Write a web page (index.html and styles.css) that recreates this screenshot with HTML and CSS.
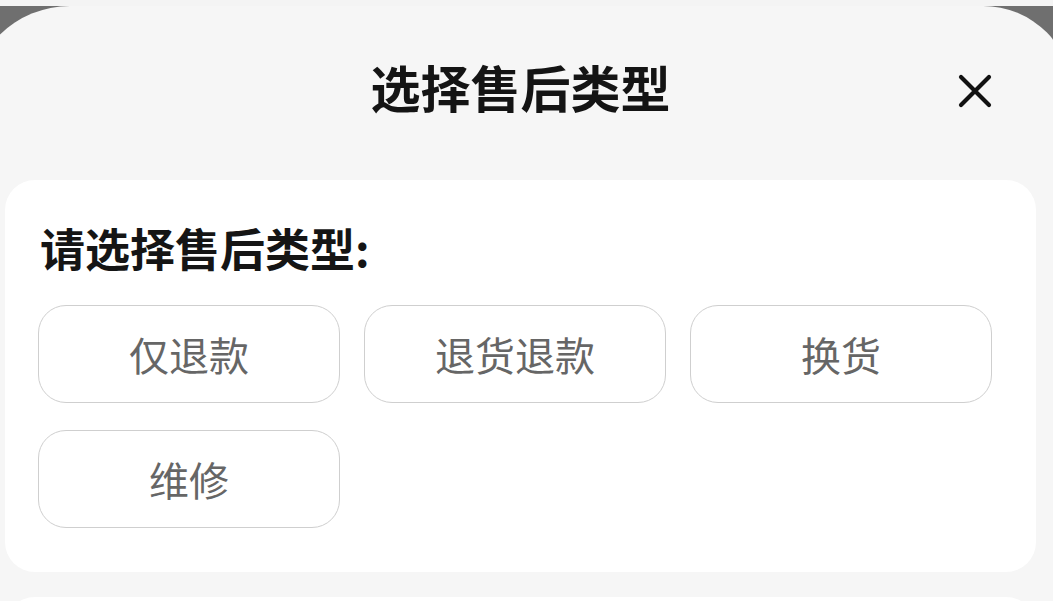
FILE: index.html
```html
<!DOCTYPE html>
<html lang="zh-CN">
<head>
<meta charset="utf-8">
<title>选择售后类型</title>
<link rel="stylesheet" href="styles.css">
</head>
<body>
<div class="sheet">
  <header class="sheet-header">
    <h1 class="sheet-title">选择售后类型</h1>
    <button class="close-btn" aria-label="关闭">
      <svg viewBox="0 0 34 34" width="34" height="34"><path d="M3 3 L31 31 M31 3 L3 31" stroke="#111" stroke-width="4.2" stroke-linecap="round" fill="none"/></svg>
    </button>
  </header>
  <section class="card">
    <h2 class="card-label">请选择售后类型:</h2>
    <div class="options">
      <button class="option">仅退款</button>
      <button class="option">退货退款</button>
      <button class="option">换货</button>
      <button class="option">维修</button>
    </div>
  </section>
  <section class="card card-next"></section>
</div>
</body>
</html>
```
FILE: styles.css
```css
html, body {
  margin: 0;
  padding: 0;
  overflow: hidden;
  height: 100%;
}
body {
  background: linear-gradient(#f4f4f4 0 6px, #6f6f6f 6px);
  font-family: "Noto Sans CJK SC", "Noto Sans", sans-serif;
}
.sheet {
  margin: 6px -20px 0 -30px;
  padding: 0 37px 0 35px;
  background: #f6f6f6;
  border-radius: 100px 90px 0 0;
  min-height: 700px;
}
.sheet-header {
  display: grid;
  grid-template-columns: 1fr auto 1fr;
  align-items: center;
  height: 160px;
}
.sheet-title {
  grid-column: 2;
  margin: 0;
  font-size: 50px;
  font-weight: 700;
  color: #141414;
  line-height: 1;
}
.close-btn {
  grid-column: 3;
  justify-self: end;
  margin: 10px 44px 0 0;
  width: 34px;
  height: 34px;
  padding: 0;
  border: 0;
  background: none;
  display: flex;
}
.card {
  margin-top: 14px;
  background: #fff;
  border-radius: 30px;
  padding: 41px 33px 44px 33px;
}
.card-label {
  margin: 0 0 31px 2px;
  font-size: 45px;
  line-height: 53px;
  font-weight: 700;
  color: #151515;
}
.options {
  display: grid;
  grid-template-columns: repeat(3, 302px);
  column-gap: 24px;
  row-gap: 27px;
}
.option {
  height: 98px;
  background: #fff;
  border: 1.5px solid #cfcfcf;
  border-radius: 28px;
  font-family: inherit;
  font-size: 40px;
  color: #666;
  padding: 0;
}
.card-next {
  margin-top: 25px;
  padding: 0;
  height: 60px;
}
```
